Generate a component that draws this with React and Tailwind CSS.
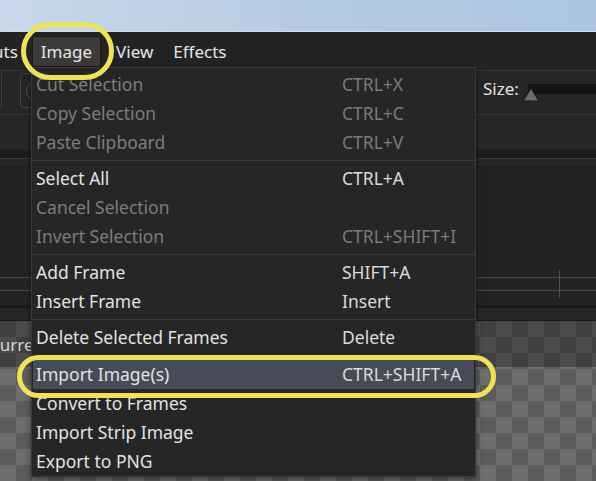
import React from 'react';

const items = [
  { label: 'Cut Selection', sc: 'CTRL+X', dis: true },
  { label: 'Copy Selection', sc: 'CTRL+C', dis: true },
  { label: 'Paste Clipboard', sc: 'CTRL+V', dis: true },
  { sep: 'h-[7px]' },
  { label: 'Select All', sc: 'CTRL+A' },
  { label: 'Cancel Selection', sc: '', dis: true },
  { label: 'Invert Selection', sc: 'CTRL+SHIFT+I', dis: true },
  { sep: 'h-[7px]' },
  { label: 'Add Frame', sc: 'SHIFT+A' },
  { label: 'Insert Frame', sc: 'Insert' },
  { sep: 'h-[7px]' },
  { label: 'Delete Selected Frames', sc: 'Delete' },
  { sep: 'h-[8px]' },
  { label: 'Import Image(s)', sc: 'CTRL+SHIFT+A', active: true },
  { label: 'Convert to Frames' },
  { label: 'Import Strip Image' },
  { label: 'Export to PNG' },
];

function ImageMenu() {
  return (
    <div className="absolute left-[31px] top-[67px] w-[445px] border border-[#383838] bg-[#262626] pt-[2px] text-[17.5px] shadow-[0_2px_6px_rgba(0,0,0,0.5)]">
      {items.map((it, i) =>
        it.sep ? (
          <div key={i} className={`flex items-center ${it.sep}`}>
            <div className="h-px w-full bg-[#3a3a3a]" />
          </div>
        ) : (
          <div
            key={i}
            className={`mx-[1px] flex h-[29px] items-center px-[3px] ${it.active ? 'bg-[#474b58]' : ''}`}
          >
            <span className={`w-[306px] whitespace-nowrap ${it.dis ? 'text-[#7c7c7c]' : 'text-[#e2e2e2]'}`}>
              {it.label}
            </span>
            <span className={`whitespace-nowrap ${it.dis ? 'text-[#7a7a7a]' : 'text-[#dadada]'}`}>{it.sc}</span>
          </div>
        )
      )}
    </div>
  );
}

export default function App() {
  return (
    <div className="relative h-[481px] w-[596px] overflow-hidden bg-[#232323] font-['Noto_Sans',sans-serif] text-[17px] leading-none">
      {/* desktop behind the window */}
      <div className="h-[32px] border-b border-[#d3dde8] bg-linear-to-r from-[#c9d8ea] via-[#b6cbe3] to-[#abc5e1]" />

      {/* menu bar */}
      <div className="flex h-[38px] items-center bg-[#232323] text-[#e6e6e6]">
        <span className="-ml-[7px]">uts</span>
        <div className="ml-[14px] flex h-[31px] items-center rounded-[3px] border border-[#1b1b1b] bg-[#3b3b3b] px-[8px]">
          Image
        </div>
        <span className="ml-[15px]">View</span>
        <span className="ml-[20px]">Effects</span>
      </div>

      {/* toolbar */}
      <div className="flex h-[44px] items-start border-t border-[#333333] bg-[#262626]">
        <div className="-ml-[20px] h-[37px] w-[22px] rounded-[3px] border border-[#3e3e3e]" />
        <div className="ml-[18px] mt-[2px] flex h-[35px] w-[80px] items-center rounded-[4px] border border-[#444444] pl-[5px]">
          <div className="h-[20px] w-[20px] rounded-full border border-[#555555]" />
        </div>
        <div className="ml-auto flex w-[113px] items-center pt-[9px]">
          <span className="text-[#e2e2e2]">Size:</span>
          <div className="relative ml-[9px] h-[10px] flex-1 bg-[#141414]">
            <svg className="absolute -left-[6px] top-[3px]" width="18" height="15" viewBox="0 0 18 15">
              <path d="M9 1 L17 14 L1 14 Z" fill="#6a6a74" stroke="#1a1a1a" strokeWidth="1.2" />
            </svg>
          </div>
        </div>
      </div>

      <div className="h-[36px] border-t border-[#363636] bg-[#262626]" />
      <div className="h-[8px] bg-[#1d1d1d]" />
      <div className="h-[8px] border-t border-[#3a3a3a] bg-[#262626]" />

      {/* timeline */}
      <div className="h-[111px] border-t border-[#1a1a1a] bg-[#232323]" />
      <div className="h-[13px] border-t border-[#474747] bg-[#232323]" />
      <div className="h-[15px] border-t border-[#474747] bg-[#232323]" />
      <div className="h-[3px] bg-[#1a1a1a]" />
      <div className="h-[13px] border-b border-[#1a1a1a] bg-[#262626]" />

      {/* canvas */}
      <div className="h-[160px] bg-[conic-gradient(#6d6d6d_25%,#5c5c5c_0_50%,#6d6d6d_0_75%,#5c5c5c_0)] bg-size-[32px_32px]">
        <div className="flex h-[46px] items-center bg-black/30">
          <span className="-ml-[11px] text-[#d6d6d6]">Current</span>
        </div>
      </div>

      {/* timeline playhead marker */}
      <div className="absolute left-[559px] top-[270px] h-[28px] w-px bg-[#505050]" />

      <ImageMenu />

      {/* annotation rings */}
      <div className="absolute left-[21px] top-[22px] h-[58px] w-[93px] rounded-[29px] border-[5px] border-[#ece35a]" />
      <div className="absolute left-[17px] top-[355px] h-[43px] w-[479px] rounded-full border-[5px] border-[#ece35a]" />
    </div>
  );
}
